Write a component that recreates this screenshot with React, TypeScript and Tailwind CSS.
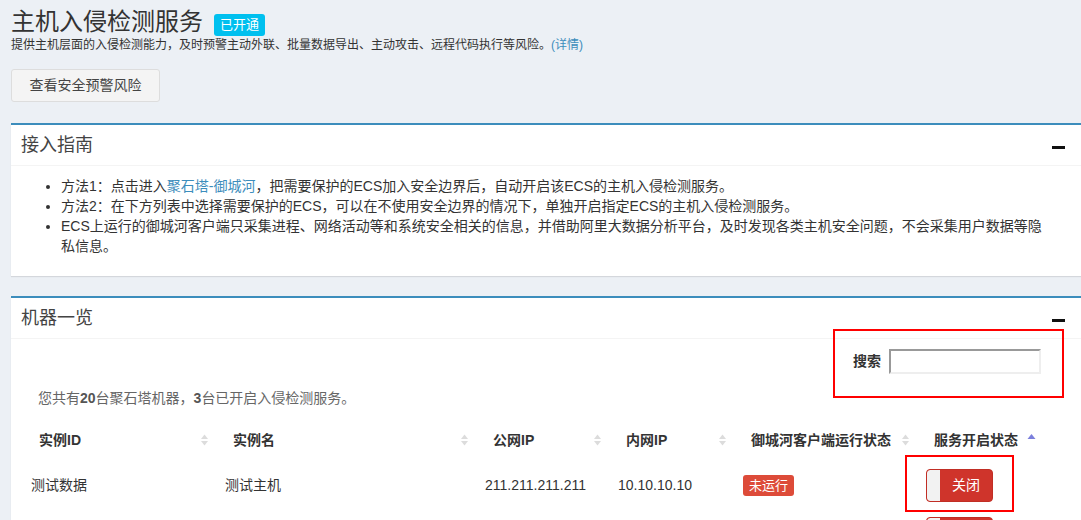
import type { ReactNode } from 'react'

const COLS = [
  { title: '实例ID', w: 194, sort: 'both' },
  { title: '实例名', w: 260, sort: 'both' },
  { title: '公网IP', w: 133, sort: 'both' },
  { title: '内网IP', w: 125, sort: 'both' },
  { title: '御城河客户端运行状态', w: 183, sort: 'both' },
  { title: '服务开启状态', w: 127, sort: 'asc' },
]

// second row only peeks in at the bottom edge, so its texts are left out
const ROWS = [
  { id: '测试数据', name: '测试主机', pub: '211.211.211.211', priv: '10.10.10.10', state: '未运行', label: '关闭', mark: true },
  { id: '', name: '', pub: '', priv: '', state: '', label: '', mark: false },
]

function SortIcon({ kind }: { kind: string }) {
  if (kind === 'asc') {
    return (
      <svg width="9" height="14" viewBox="0 0 9 14" className="absolute right-[9px] top-[14px]">
        <path d="M0.5 6 L4.5 1 L8.5 6 Z" fill="#7b7fdc" />
      </svg>
    )
  }
  return (
    <svg width="9" height="14" viewBox="0 0 9 14" className="absolute right-[8px] top-[14px]">
      <path d="M1 6 L4.5 1.5 L8 6 Z" fill="#dcdcdc" />
      <path d="M1 8 L4.5 12.5 L8 8 Z" fill="#dcdcdc" />
    </svg>
  )
}

function Box({ title, children }: { title: string; children: ReactNode }) {
  return (
    <div className="relative w-[1075px] bg-white border-t-2 border-[#3c8dbc] shadow-[0_1px_1px_rgba(0,0,0,0.1)]">
      <div className="h-[41px] flex items-center justify-between pl-[10px] pr-[21px] border-b border-[#f4f4f4]">
        <h3 className="text-[18px] leading-[20px] text-[#444]">{title}</h3>
        <span className="w-[13px] h-[3px] bg-[#111] mt-[4px]" />
      </div>
      {children}
    </div>
  )
}

function Toggle({ label }: { label: string }) {
  return (
    <div className="w-[67px] h-[33px] rounded-[4px] border border-[#c12e25] bg-[#cf342b] flex overflow-hidden">
      <span className="w-[13px] h-full bg-[#f2f2f2] rounded-l-[3px]" />
      <span className="flex-1 flex items-center justify-center text-white text-[14px]">{label}</span>
    </div>
  )
}

export default function App() {
  return (
    <div className="w-full h-[520px] overflow-hidden bg-[#ecf0f5] font-['Liberation_Sans','Noto_Sans_CJK_SC',sans-serif] text-[#333]">
      <div className="pl-[11px] pt-[9px]">
        <div className="h-[28px] flex items-start gap-[11px]">
          <h1 className="text-[24px] leading-[26px] text-[#333]">主机入侵检测服务</h1>
          <span className="mt-[5px] h-[22px] px-[6px] rounded-[3px] bg-[#00c0ef] text-white text-[13px] leading-[22px]">已开通</span>
        </div>
        <p className="text-[12px] leading-[16px] text-[#333]">
          提供主机层面的入侵检测能力，及时预警主动外联、批量数据导出、主动攻击、远程代码执行等风险。<span className="text-[#3c8dbc]">(详情)</span>
        </p>
        <button className="mt-[16px] h-[33px] w-[149px] rounded-[3px] border border-[#ddd] bg-[#f4f4f4] text-[14px] text-[#444]">
          查看安全预警风险
        </button>

        <div className="mt-[21px]">
          <Box title="接入指南">
            <div className="pt-[10px] pb-[20px] pl-[10px]">
              <ul className="list-disc pl-[40px] w-[1025px] text-[14px] leading-[20px] text-[#333]">
                <li>方法1：点击进入<span className="text-[#3c8dbc]">聚石塔-御城河</span>，把需要保护的ECS加入安全边界后，自动开启该ECS的主机入侵检测服务。</li>
                <li>方法2：在下方列表中选择需要保护的ECS，可以在不使用安全边界的情况下，单独开启指定ECS的主机入侵检测服务。</li>
                <li>ECS上运行的御城河客户端只采集进程、网络活动等和系统安全相关的信息，并借助阿里大数据分析平台，及时发现各类主机安全问题，不会采集用户数据等隐私信息。</li>
              </ul>
            </div>
          </Box>
        </div>

        <div className="mt-[20px]">
          <Box title="机器一览">
            <div className="pl-[12px] pt-[10px] pb-[20px] w-[1046px]">
              <div className="flex justify-end items-center gap-[8px] pr-[16px]">
                <span className="text-[14px] font-bold text-[#333]">搜索</span>
                <input className="w-[152px] h-[25px] border-2 border-t-[#999] border-l-[#999] border-b-[#eee] border-r-[#eee] bg-white outline-none" />
              </div>
              <p className="mt-[14px] pl-[15px] text-[14px] leading-[20px] text-[#666]">
                您共有<b className="text-[#555]">20</b>台聚石塔机器，<b className="text-[#555]">3</b>台已开启入侵检测服务。
              </p>
              <table className="mt-[11px] table-fixed w-[1022px] border-collapse">
                <colgroup>
                  {COLS.map((c) => (
                    <col key={c.title} style={{ width: c.w }} />
                  ))}
                </colgroup>
                <thead>
                  <tr className="h-[42px]">
                    {COLS.map((c) => (
                      <th key={c.title} className="relative text-left pl-[16px] text-[14px] font-bold text-[#333]">
                        {c.title}
                        <SortIcon kind={c.sort} />
                      </th>
                    ))}
                  </tr>
                </thead>
                <tbody>
                  {ROWS.map((r, i) => (
                    <tr key={i} className="h-[48px] text-[14px] text-[#333]">
                      <td className="pl-[8px]">{r.id}</td>
                      <td className="pl-[8px]">{r.name}</td>
                      <td className="pl-[8px]">{r.pub}</td>
                      <td className="pl-[8px]">{r.priv}</td>
                      <td className="pl-[8px]">
                        {r.state && (
                          <span className="inline-block h-[21px] px-[6px] rounded-[3px] bg-[#dd4b39] text-white text-[13px] leading-[21px]">{r.state}</span>
                        )}
                      </td>
                      <td className="pl-[8px]">
                        <div className="relative inline-block align-middle">
                          <Toggle label={r.label} />
                          {r.mark && (
                            <span className="absolute -left-[21px] -top-[14px] w-[109px] h-[57px] border-2 border-[#f00]" />
                          )}
                        </div>
                      </td>
                    </tr>
                  ))}
                </tbody>
              </table>
            </div>
            <span className="absolute left-[822px] top-[31px] w-[231px] h-[69px] border-2 border-[#f00]" />
          </Box>
        </div>
      </div>
    </div>
  )
}
